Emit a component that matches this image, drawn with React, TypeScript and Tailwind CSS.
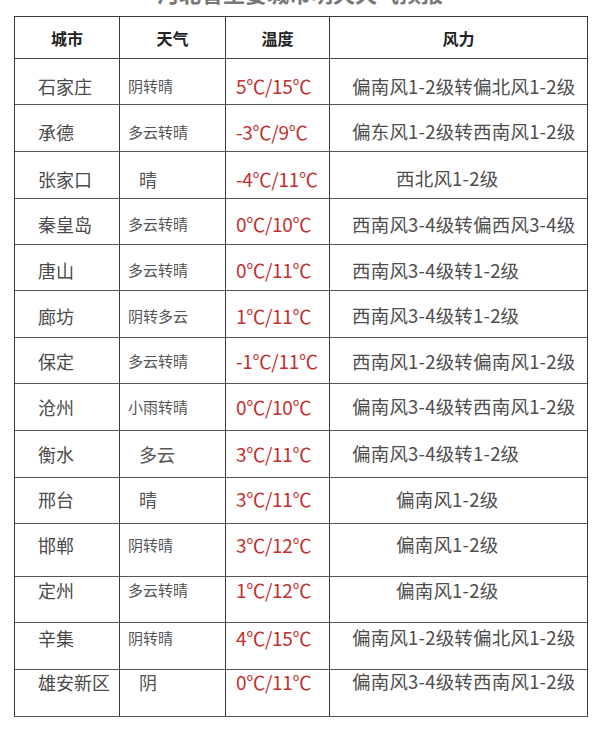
type Row = {
  city: string;
  weather: string;
  shortWeather?: boolean;
  temp: string;
  wind: string;
  shortWind?: boolean;
  // row height (incl. bottom border) and text nudge, measured off the scan
  h: string;
  dy: string;
};

const rows: Row[] = [
  { city: '石家庄', weather: '阴转晴', temp: '5℃/15℃', wind: '偏南风1-2级转偏北风1-2级', h: 'h-[46px]', dy: 'translate-y-[5px]' },
  { city: '承德', weather: '多云转晴', temp: '-3℃/9℃', wind: '偏东风1-2级转西南风1-2级', h: 'h-[47px]', dy: 'translate-y-[4px]' },
  { city: '张家口', weather: '晴', shortWeather: true, temp: '-4℃/11℃', wind: '西北风1-2级', shortWind: true, h: 'h-[47px]', dy: 'translate-y-[4px]' },
  { city: '秦皇岛', weather: '多云转晴', temp: '0℃/10℃', wind: '西南风3-4级转偏西风3-4级', h: 'h-[46px]', dy: 'translate-y-[3px]' },
  { city: '唐山', weather: '多云转晴', temp: '0℃/11℃', wind: '西南风3-4级转1-2级', h: 'h-[46px]', dy: 'translate-y-[3px]' },
  { city: '廊坊', weather: '阴转多云', temp: '1℃/11℃', wind: '西南风3-4级转1-2级', h: 'h-[47px]', dy: 'translate-y-[2px]' },
  { city: '保定', weather: '多云转晴', temp: '-1℃/11℃', wind: '西南风1-2级转偏南风1-2级', h: 'h-[46px]', dy: 'translate-y-[1px]' },
  { city: '沧州', weather: '小雨转晴', temp: '0℃/10℃', wind: '偏南风3-4级转西南风1-2级', h: 'h-[47px]', dy: 'translate-y-0' },
  { city: '衡水', weather: '多云', shortWeather: true, temp: '3℃/11℃', wind: '偏南风3-4级转1-2级', h: 'h-[47px]', dy: 'translate-y-0' },
  { city: '邢台', weather: '晴', shortWeather: true, temp: '3℃/11℃', wind: '偏南风1-2级', shortWind: true, h: 'h-[46px]', dy: '-translate-y-[1px]' },
  { city: '邯郸', weather: '阴转晴', temp: '3℃/12℃', wind: '偏南风1-2级', shortWind: true, h: 'h-[53px]', dy: '-translate-y-[5px]' },
  { city: '定州', weather: '多云转晴', temp: '1℃/12℃', wind: '偏南风1-2级', shortWind: true, h: 'h-[46px]', dy: '-translate-y-[9px]' },
  { city: '辛集', weather: '阴转晴', temp: '4℃/15℃', wind: '偏南风1-2级转偏北风1-2级', h: 'h-[47px]', dy: '-translate-y-[8px]' },
  { city: '雄安新区', weather: '阴', shortWeather: true, temp: '0℃/11℃', wind: '偏南风3-4级转西南风1-2级', h: 'h-[47px]', dy: '-translate-y-[11px]' },
];

const cell = 'flex items-center border-r border-[#3a3a3a]';

export default function App() {
  return (
    <div className="h-[736px] w-[600px] overflow-hidden bg-white font-['Noto_Sans_CJK_SC',sans-serif]">
      {/* title line, mostly cut off by the top of the crop */}
      <div className="h-[16px] overflow-hidden">
        <div className="-mt-[19px] text-center text-[22px] font-bold leading-[22px] text-[#777]">
          河北省主要城市明天天气预报
        </div>
      </div>

      <div className="ml-[14px] w-[574px] border-x border-t border-[#3a3a3a]">
        <div className="flex h-[42px] border-b border-[#444] text-[16px] font-bold text-[#222]">
          <div className={`${cell} w-[105px] justify-center`}>城市</div>
          <div className={`${cell} w-[106px] justify-center`}>天气</div>
          <div className={`${cell} w-[104px] justify-center`}>温度</div>
          <div className="flex flex-1 items-center justify-center">风力</div>
        </div>

        {rows.map(r => (
          <div key={r.city} className={`flex border-b border-[#555] ${r.h}`}>
            <div className={`${cell} w-[105px] pl-[23px]`}>
              <span className={`text-[18px] text-[#4a4a4a] ${r.dy}`}>{r.city}</span>
            </div>
            <div className={`${cell} w-[106px] ${r.shortWeather ? 'pl-[19px]' : 'pl-[8px]'}`}>
              <span className={`text-[#555] ${r.shortWeather ? 'text-[18px]' : 'text-[15px]'} ${r.dy}`}>{r.weather}</span>
            </div>
            <div className={`${cell} w-[104px] pl-[10px]`}>
              <span className={`whitespace-nowrap text-[19px] tracking-[-0.3px] text-[#c2302e] ${r.dy}`}>{r.temp}</span>
            </div>
            <div className={`flex flex-1 items-center ${r.shortWind ? 'pl-[66px]' : 'pl-[22px]'}`}>
              <span className={`whitespace-nowrap text-[18.5px] tracking-[0.2px] text-[#4d4d4d] ${r.dy}`}>{r.wind}</span>
            </div>
          </div>
        ))}
      </div>
    </div>
  );
}
